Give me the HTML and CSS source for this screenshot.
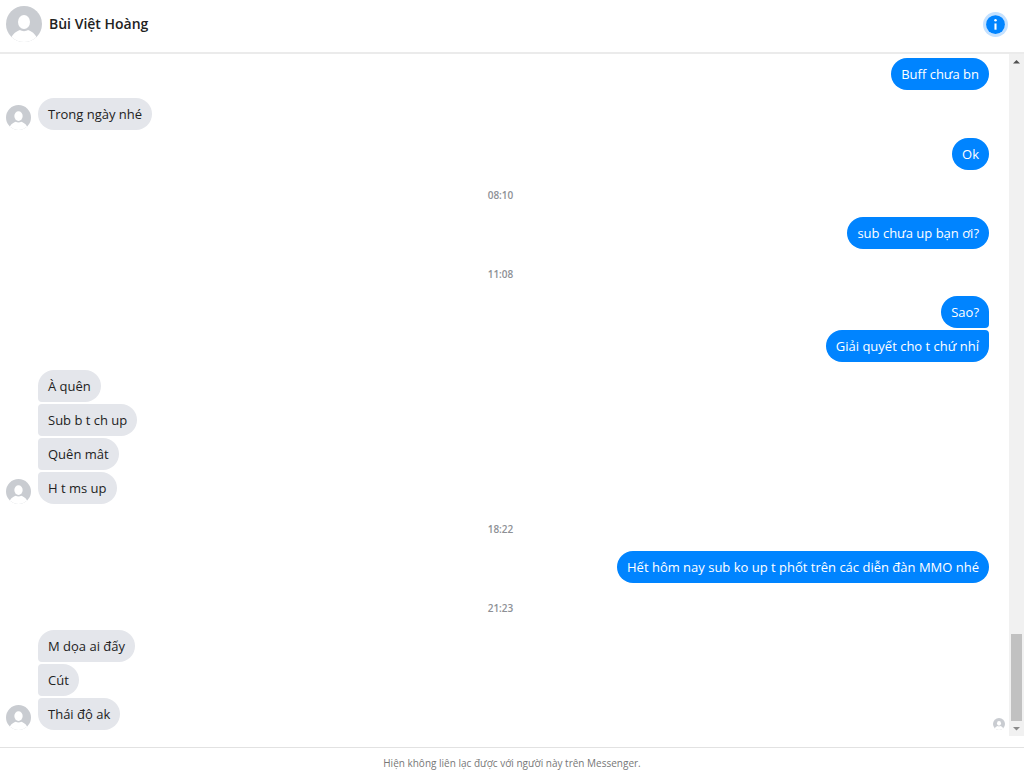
FILE: index.html
```html
<!DOCTYPE html>
<html lang="vi">
<head>
<meta charset="utf-8">
<meta name="viewport" content="width=device-width, initial-scale=1.0">
<title>Bùi Việt Hoàng | Messenger</title>
<link rel="stylesheet" href="styles.css">
</head>
<body>
<svg class="defs" aria-hidden="true">
  <symbol id="person" viewBox="0 0 36 36">
    <clipPath id="round"><circle cx="18" cy="18" r="18"/></clipPath>
    <g clip-path="url(#round)">
      <rect width="36" height="36" fill="#c9ccd1"/>
      <ellipse cx="18" cy="16" rx="6" ry="7" fill="#fff"/>
      <path d="M4 36c1-7 5-10 10-12 2 1.500 6 1.500 8 0 5 2 9 5 10 12z" fill="#fff"/>
    </g>
  </symbol>
</svg>

<header class="header">
  <svg class="avatar-large"><use href="#person"/></svg>
  <h1>Bùi Việt Hoàng</h1>
  <button class="info" type="button" aria-label="Thông tin">
    <svg viewBox="0 0 24 24">
      <circle cx="12" cy="12" r="12" fill="#c4e1ff"/>
      <circle cx="12" cy="12" r="9" fill="#0084ff"/>
      <circle cx="12" cy="8" r="1.200" fill="#fff"/>
      <path d="M11 11h2v6h-2z" fill="#fff"/>
    </svg>
  </button>
</header>

<main class="chat">
  <div class="thread">
    <div class="group sent">
      <div class="bubbles"><p>Buff chưa bn</p></div>
    </div>
    <div class="group">
      <svg class="avatar"><use href="#person"/></svg>
      <div class="bubbles"><p>Trong ngày nhé</p></div>
    </div>
    <div class="group sent">
      <div class="bubbles"><p>Ok</p></div>
    </div>
    <time>08:10</time>
    <div class="group sent">
      <div class="bubbles"><p>sub chưa up bạn ơi?</p></div>
    </div>
    <time>11:08</time>
    <div class="group sent">
      <div class="bubbles">
        <p>Sao?</p>
        <p>Giải quyết cho t chứ nhỉ</p>
      </div>
    </div>
    <div class="group">
      <svg class="avatar"><use href="#person"/></svg>
      <div class="bubbles">
        <p>À quên</p>
        <p>Sub b t ch up</p>
        <p>Quên mât</p>
        <p>H t ms up</p>
      </div>
    </div>
    <time>18:22</time>
    <div class="group sent">
      <div class="bubbles"><p>Hết hôm nay sub ko up t phốt trên các diễn đàn MMO nhé</p></div>
    </div>
    <time>21:23</time>
    <div class="group">
      <svg class="avatar"><use href="#person"/></svg>
      <div class="bubbles">
        <p>M dọa ai đấy</p>
        <p>Cút</p>
        <p>Thái độ ak</p>
      </div>
      <svg class="seen"><use href="#person"/></svg>
    </div>
  </div>
  <div class="scrollbar" aria-hidden="true">
    <svg viewBox="0 0 15 15"><path d="M4 9.500h7L7.500 6z" fill="#505050"/></svg>
    <div class="thumb"></div>
    <svg viewBox="0 0 15 15"><path d="M4 6h7L7.500 9.500z" fill="#8a8a8a"/></svg>
  </div>
</main>

<footer class="footer">Hiện không liên lạc được với người này trên Messenger.</footer>
</body>
</html>
```
FILE: styles.css
```css
* {
  box-sizing: border-box;
}

body {
  margin: 0;
  min-height: 100vh;
  display: flex;
  flex-direction: column;
  background: #fff;
  color: #222;
  font-family: 'Open Sans', 'Noto Sans', sans-serif;
  font-size: 13px;
}

svg {
  display: block;
  flex: none;
}

.defs {
  position: absolute;
  width: 0;
  height: 0;
}

.header {
  display: flex;
  align-items: center;
  padding: 6px 16px 10px 6px;
  border-bottom: 2px solid #ebebeb;
}

.avatar-large {
  width: 36px;
  height: 36px;
}

h1 {
  margin: 0 0 0 7px;
  font-size: 14px;
  line-height: 18px;
  font-weight: 600;
}

.info {
  margin-left: auto;
  padding: 0;
  border: none;
  background: none;
  cursor: pointer;
}

.info svg {
  width: 25px;
  height: 25px;
}

.chat {
  display: flex;
}

.thread {
  flex: 1;
  display: flex;
  flex-direction: column;
  gap: 8px;
  padding: 4px 4px 6px 6px;
}

.group {
  display: flex;
  align-items: flex-end;
  gap: 7px;
}

.group.sent {
  justify-content: flex-end;
  padding-right: 16px;
}

.bubbles {
  display: flex;
  flex-direction: column;
  align-items: flex-start;
  gap: 2px;
}

.bubbles p {
  margin: 0;
  padding: 7px 10px;
  line-height: 18px;
  background: #e4e6eb;
  border-radius: 4px 16px 16px 4px;
}

.bubbles p:first-child {
  border-top-left-radius: 16px;
}

.bubbles p:last-child {
  border-bottom-left-radius: 16px;
}

.sent .bubbles {
  align-items: flex-end;
}

.sent .bubbles p {
  background: #0084ff;
  color: #fff;
  border-radius: 16px 4px 4px 16px;
}

.sent .bubbles p:first-child {
  border-top-right-radius: 16px;
}

.sent .bubbles p:last-child {
  border-bottom-right-radius: 16px;
}

.avatar {
  width: 25px;
  height: 25px;
}

.seen {
  width: 12px;
  height: 12px;
  margin-left: auto;
}

time {
  padding: 9px 10px 6px 0;
  line-height: 16px;
  font-size: 10px;
  font-weight: 600;
  text-align: center;
  color: #8d9095;
}

.scrollbar {
  width: 15px;
  display: flex;
  flex-direction: column;
  background: #f1f1f1;
}

.scrollbar svg {
  width: 15px;
  height: 15px;
}

.thumb {
  height: 87px;
  margin: auto 2px 0;
  background: #c1c1c1;
}

.footer {
  flex: 1;
  margin-top: 11px;
  padding-top: 7px;
  border-top: 1px solid #e2e2e2;
  line-height: 16px;
  font-size: 10px;
  text-align: center;
  color: #777;
}
```
